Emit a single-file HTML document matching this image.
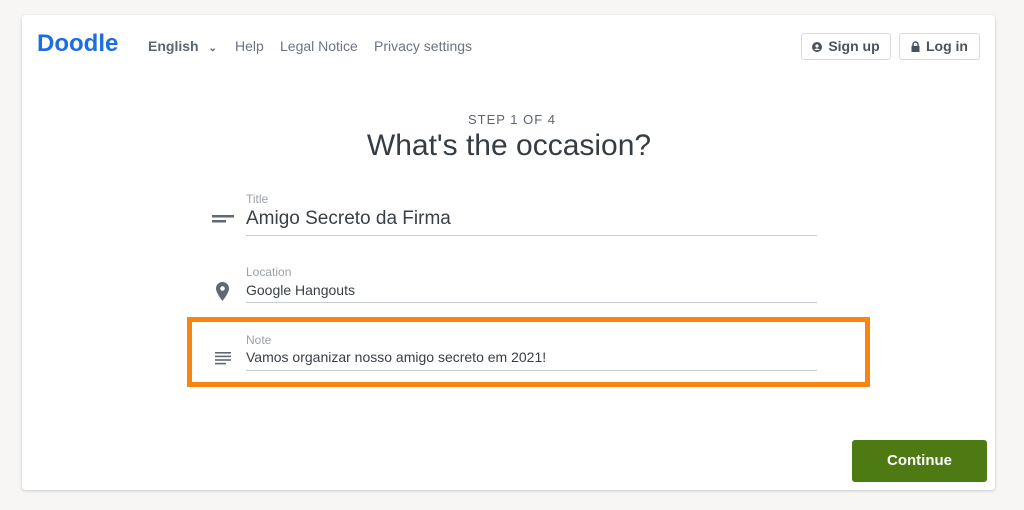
<!DOCTYPE html>
<html><head><meta charset="utf-8"><style>
body{margin:0;width:1024px;height:510px;background:#f7f6f4;font-family:"Liberation Sans",sans-serif;position:relative;overflow:hidden}
.card{position:absolute;left:22px;top:15px;width:973px;height:475px;background:#fff;border-radius:4px;box-shadow:0 1px 3px rgba(0,0,0,.18)}
.a{position:absolute;white-space:nowrap}
.logo{left:37px;top:30px;font-size:24px;font-weight:bold;color:#1d6ee0;letter-spacing:0}
.nav{font-size:14px;color:#6b7480;top:38px}
.btn{position:absolute;top:33px;height:27px;border:1px solid #d8dce0;border-radius:3px;font-size:14px;font-weight:bold;color:#4a525c;box-sizing:border-box;line-height:25px;text-align:center}
.lbl{font-size:12px;color:#9aa1a8}
.line{position:absolute;left:246px;width:571px;height:1px;background:#c8cdd2}
</style></head><body>
<div class="card"></div>
<div class="a logo">Doodle</div>
<div class="a nav" style="left:148px;font-weight:bold;color:#5c6570">English <span style="font-size:10px;margin-left:6px">⌄</span></div>
<div class="a nav" style="left:235px">Help</div>
<div class="a nav" style="left:280px">Legal Notice</div>
<div class="a nav" style="left:374px">Privacy settings</div>
<div class="btn" style="left:801px;width:90px"><svg width="10" height="10" viewBox="0 0 10 10" style="vertical-align:-1px;margin-right:6px"><circle cx="5" cy="5" r="5" fill="#4a525c"/><circle cx="5" cy="4" r="1.6" fill="#fff"/><path d="M2.2 8a3 2.4 0 0 1 5.6 0z" fill="#fff"/></svg>Sign up</div>
<div class="btn" style="left:899px;width:81px"><svg width="9" height="11" viewBox="0 0 9 11" style="vertical-align:-1px;margin-right:6px"><path d="M2 5V3.5a2.5 2.5 0 0 1 5 0V5" stroke="#4a525c" stroke-width="1.5" fill="none"/><rect x="0.5" y="5" width="8" height="6" fill="#4a525c"/></svg>Log in</div>
<div class="a" style="left:0;width:1024px;text-align:center;top:112px;font-size:13px;color:#5c6570;letter-spacing:1px">STEP 1 OF 4</div>
<div class="a" style="left:0;width:1018px;text-align:center;top:129px;font-size:30px;color:#363c44">What's the occasion?</div>
<div class="a lbl" style="left:246px;top:192px">Title</div>
<svg class="a" style="left:212px;top:213px" width="22" height="10"><rect x="0" y="2" width="22" height="2.5" fill="#5f6873"/><rect x="0" y="7" width="14" height="2.5" fill="#5f6873"/></svg>
<div class="a" style="left:246px;top:208px;font-size:19px;color:#3a4048">Amigo Secreto da Firma</div>
<div class="line" style="top:235px"></div>
<div class="a lbl" style="left:246px;top:265px">Location</div>
<svg class="a" style="left:216px;top:282px" width="13" height="19" viewBox="0 0 13 19"><path d="M6.5 0A6.5 6.5 0 0 0 0 6.5C0 11 6.5 19 6.5 19S13 11 13 6.5A6.5 6.5 0 0 0 6.5 0z" fill="#5f6873"/><circle cx="6.5" cy="6.5" r="2.3" fill="#fff"/></svg>
<div class="a" style="left:246px;top:282px;font-size:14px;color:#3a4048">Google Hangouts</div>
<div class="line" style="top:302px"></div>
<div class="a" style="left:187px;top:317px;width:673px;height:60px;border:5px solid #f7850f"></div>
<div class="a lbl" style="left:246px;top:333px">Note</div>
<svg class="a" style="left:215px;top:352px" width="16" height="13"><rect y="0" width="16" height="1.6" fill="#5f6873"/><rect y="3.6" width="16" height="1.6" fill="#5f6873"/><rect y="7.2" width="16" height="1.6" fill="#5f6873"/><rect y="10.8" width="11" height="1.6" fill="#5f6873"/></svg>
<div class="a" style="left:246px;top:349px;font-size:14px;color:#3a4048">Vamos organizar nosso amigo secreto em 2021!</div>
<div class="line" style="top:370px"></div>
<div class="a" style="left:852px;top:440px;width:135px;height:42px;background:#4e7a14;border-radius:3px;color:#fff;font-weight:bold;font-size:15px;text-align:center;line-height:42px">Continue</div>
</body></html>
